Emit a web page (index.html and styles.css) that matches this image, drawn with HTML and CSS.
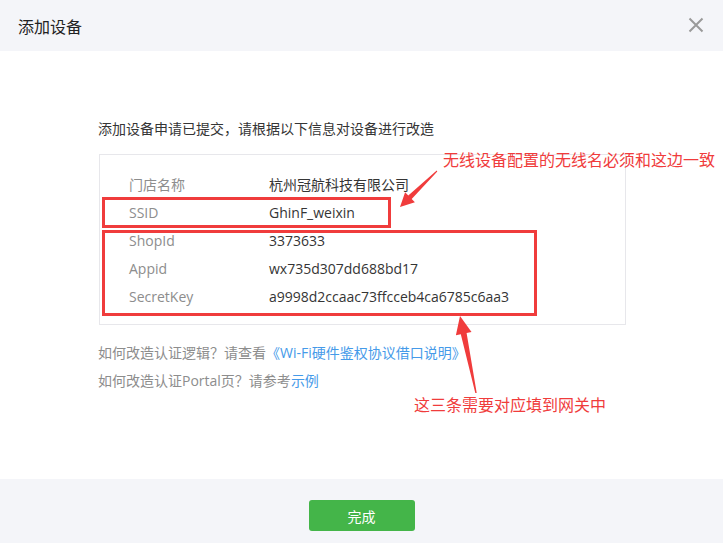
FILE: index.html
```html
<!DOCTYPE html>
<html lang="zh-CN">
<head>
    <meta charset="UTF-8">
    <title>添加设备</title>
    <link rel="stylesheet" href="styles.css">
</head>
<body>
    <div class="dialog">
        <div class="dialog-hd">
            <h3>添加设备</h3>
            <span class="close">
                <svg width="16" height="16" viewBox="0 0 16 16"><path d="M1.5 1.5L14.5 14.5M14.5 1.5L1.5 14.5" stroke="#9a9a9a" stroke-width="2"/></svg>
            </span>
        </div>

        <div class="dialog-bd">
            <p class="intro">添加设备申请已提交，请根据以下信息对设备进行改造</p>

            <div class="info-box">
                <div class="info-row"><span class="label">门店名称</span><span class="value">杭州冠航科技有限公司</span></div>
                <div class="info-row"><span class="label">SSID</span><span class="value">GhinF_weixin</span></div>
                <div class="info-row"><span class="label">ShopId</span><span class="value">3373633</span></div>
                <div class="info-row"><span class="label">Appid</span><span class="value">wx735d307dd688bd17</span></div>
                <div class="info-row"><span class="label">SecretKey</span><span class="value">a9998d2ccaac73ffcceb4ca6785c6aa3</span></div>
            </div>

            <p class="tips">如何改造认证逻辑？请查看<a href="#">《Wi-Fi硬件鉴权协议借口说明》</a></p>
            <p class="tips">如何改造认证Portal页？请参考<a href="#">示例</a></p>
        </div>

        <div class="dialog-ft">
            <button class="btn-green">完成</button>
        </div>

        <!-- 标注 -->
        <svg class="marks" width="723" height="543" viewBox="0 0 723 543">
            <rect x="103.5" y="198.5" width="286" height="28" fill="none" stroke="#f03c3c" stroke-width="3"/>
            <rect x="103.5" y="231.5" width="432" height="83" fill="none" stroke="#f03c3c" stroke-width="3"/>
            <polygon fill="#f03c3c" points="437.3,171.4 411.7,199 414.9,202.2 400,207 405.1,192.2 408.3,195.4 436.7,170.6"/>
            <polygon fill="#f03c3c" points="476.7,392.9 466.6,333 471.5,332 460,316 455.9,335.2 460.8,334.2 475.3,393.1"/>
        </svg>
        <div class="note note-1">无线设备配置的无线名必须和这边一致</div>
        <div class="note note-2">这三条需要对应填到网关中</div>
    </div>
</body>
</html>
```

FILE: styles.css
```css
body {
    margin: 0;
    font-family: "Open Sans", "Noto Sans CJK SC", sans-serif;
    font-size: 14px;
    color: #353535;
    background-color: #fff;
}
.dialog {
    position: relative;
    width: 723px;
    height: 543px;
    display: flex;
    flex-direction: column;
    background-color: #fff;
}
.dialog-hd {
    height: 51px;
    display: flex;
    align-items: center;
    justify-content: space-between;
    padding: 0 19px 0 18px;
    background-color: #f4f5f9;
}
.dialog-hd h3 {
    margin: 0;
    font-size: 16px;
    font-weight: normal;
    color: #222;
}
.close {
    display: flex;
    margin-top: -2px;
}
.dialog-bd {
    flex: 1;
    padding: 68px 0 0 98px;
}
.intro {
    margin: 0;
    line-height: 20px;
}
.info-box {
    width: 496px;
    margin: 15px 0 14px 1px;
    padding: 15px 0 14px 29px;
    border: 1px solid #e7e7eb;
}
.info-row {
    display: flex;
    height: 28px;
    align-items: center;
}
.label {
    width: 140px;
    color: #8d8d8d;
}
.value {
    color: #353535;
}
.tips {
    margin: 0;
    line-height: 28px;
    color: #8d8d8d;
}
.tips a {
    color: #459ae9;
    text-decoration: none;
}
.dialog-ft {
    height: 64px;
    display: flex;
    justify-content: center;
    padding-top: 21px;
    box-sizing: border-box;
    background-color: #f4f5f9;
}
.btn-green {
    width: 106px;
    height: 31px;
    border: none;
    border-radius: 3px;
    background-color: #44b549;
    color: #fff;
    font-family: inherit;
    font-size: 14px;
    cursor: pointer;
}
.marks {
    position: absolute;
    left: 0;
    top: 0;
    pointer-events: none;
}
.note {
    position: absolute;
    color: #f03c3c;
    font-size: 16px;
    line-height: 20px;
    white-space: nowrap;
}
.note-1 {
    left: 443px;
    top: 150px;
}
.note-2 {
    left: 414px;
    top: 395px;
}
```
